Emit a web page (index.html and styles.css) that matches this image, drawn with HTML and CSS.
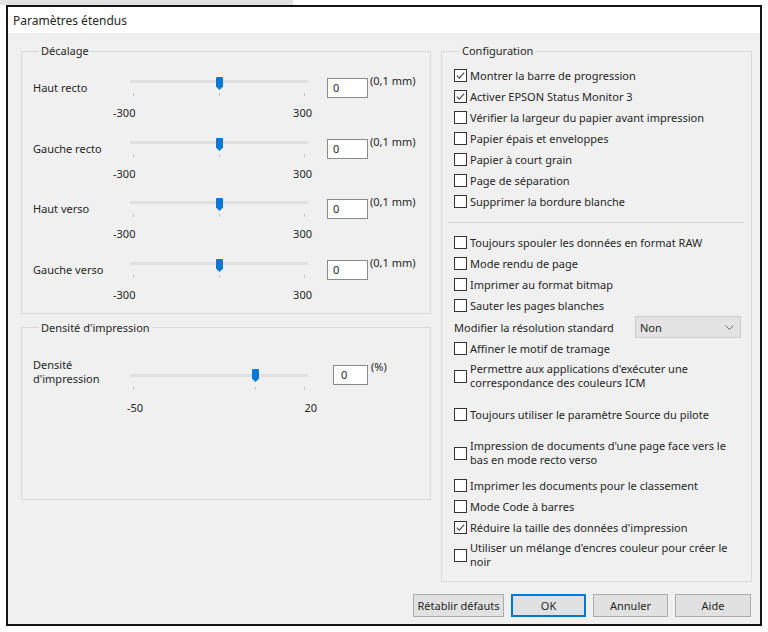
FILE: index.html
```html
<!DOCTYPE html>
<html lang="fr">
<head>
<meta charset="utf-8">
<title>Paramètres étendus</title>
<link rel="stylesheet" href="styles.css">
</head>
<body>
<div class="strip"></div>
<div class="window">
  <div class="titlebar">Paramètres étendus</div>
  <div class="client">
    <div class="left">
      <fieldset class="group g-offset">
        <legend>Décalage</legend>
        <div class="srow">
          <span class="slabel">Haut recto</span>
          <div class="slider" style="--p:0.5">
            <div class="track"></div><div class="tick t-start"></div><div class="tick t-mid"></div><div class="tick t-end"></div>
            <svg class="thumb" viewBox="0 0 7 13"><path d="M1 0H6Q7 0 7 1V9.5L3.5 13L0 9.5V1Q0 0 1 0Z"/></svg>
          </div>
          <span class="num">0</span>
          <span class="unit">(0,1 mm)</span>
          <div class="scale"><span>-300</span><span>300</span></div>
        </div>
        <div class="srow">
          <span class="slabel">Gauche recto</span>
          <div class="slider" style="--p:0.5">
            <div class="track"></div><div class="tick t-start"></div><div class="tick t-mid"></div><div class="tick t-end"></div>
            <svg class="thumb" viewBox="0 0 7 13"><path d="M1 0H6Q7 0 7 1V9.5L3.5 13L0 9.5V1Q0 0 1 0Z"/></svg>
          </div>
          <span class="num">0</span>
          <span class="unit">(0,1 mm)</span>
          <div class="scale"><span>-300</span><span>300</span></div>
        </div>
        <div class="srow">
          <span class="slabel">Haut verso</span>
          <div class="slider" style="--p:0.5">
            <div class="track"></div><div class="tick t-start"></div><div class="tick t-mid"></div><div class="tick t-end"></div>
            <svg class="thumb" viewBox="0 0 7 13"><path d="M1 0H6Q7 0 7 1V9.5L3.5 13L0 9.5V1Q0 0 1 0Z"/></svg>
          </div>
          <span class="num">0</span>
          <span class="unit">(0,1 mm)</span>
          <div class="scale"><span>-300</span><span>300</span></div>
        </div>
        <div class="srow">
          <span class="slabel">Gauche verso</span>
          <div class="slider" style="--p:0.5">
            <div class="track"></div><div class="tick t-start"></div><div class="tick t-mid"></div><div class="tick t-end"></div>
            <svg class="thumb" viewBox="0 0 7 13"><path d="M1 0H6Q7 0 7 1V9.5L3.5 13L0 9.5V1Q0 0 1 0Z"/></svg>
          </div>
          <span class="num">0</span>
          <span class="unit">(0,1 mm)</span>
          <div class="scale"><span>-300</span><span>300</span></div>
        </div>
      </fieldset>
      <fieldset class="group g-density">
        <legend>Densité d'impression</legend>
        <div class="srow dens">
          <span class="slabel">Densité<br>d'impression</span>
          <div class="slider" style="--p:0.714">
            <div class="track"></div><div class="tick t-start"></div><div class="tick t-mid"></div><div class="tick t-end"></div>
            <svg class="thumb" viewBox="0 0 7 13"><path d="M1 0H6Q7 0 7 1V9.5L3.5 13L0 9.5V1Q0 0 1 0Z"/></svg>
          </div>
          <span class="num">0</span>
          <span class="unit">(%)</span>
          <div class="scale"><span>-50</span><span>20</span></div>
        </div>
      </fieldset>
    </div>

    <fieldset class="group g-config">
      <legend>Configuration</legend>
      <div class="cb"><span class="box"><svg viewBox="0 0 11 11"><polyline points="1.8,5.6 4.3,8.1 9.2,2.6"/></svg></span><span class="txt">Montrer la barre de progression</span></div>
      <div class="cb"><span class="box"><svg viewBox="0 0 11 11"><polyline points="1.8,5.6 4.3,8.1 9.2,2.6"/></svg></span><span class="txt">Activer EPSON Status Monitor 3</span></div>
      <div class="cb"><span class="box"></span><span class="txt">Vérifier la largeur du papier avant impression</span></div>
      <div class="cb"><span class="box"></span><span class="txt">Papier épais et enveloppes</span></div>
      <div class="cb"><span class="box"></span><span class="txt">Papier à court grain</span></div>
      <div class="cb"><span class="box"></span><span class="txt">Page de séparation</span></div>
      <div class="cb"><span class="box"></span><span class="txt">Supprimer la bordure blanche</span></div>
      <hr class="sep">
      <div class="cb"><span class="box"></span><span class="txt">Toujours spouler les données en format RAW</span></div>
      <div class="cb"><span class="box"></span><span class="txt">Mode rendu de page</span></div>
      <div class="cb"><span class="box"></span><span class="txt">Imprimer au format bitmap</span></div>
      <div class="cb"><span class="box"></span><span class="txt">Sauter les pages blanches</span></div>
      <div class="selrow">
        <span class="sellabel">Modifier la résolution standard</span>
        <div class="sel"><span>Non</span><svg class="chev" viewBox="0 0 9 5"><polyline points="0.5,0.5 4.5,4.5 8.5,0.5"/></svg></div>
      </div>
      <div class="cb"><span class="box"></span><span class="txt">Affiner le motif de tramage</span></div>
      <div class="cb two"><span class="box"></span><span class="txt">Permettre aux applications d'exécuter une<br>correspondance des couleurs ICM</span></div>
      <div class="cb gap-l"><span class="box"></span><span class="txt">Toujours utiliser le paramètre Source du pilote</span></div>
      <div class="cb two gap-xl"><span class="box"></span><span class="txt">Impression de documents d'une page face vers le<br>bas en mode recto verso</span></div>
      <div class="cb gap-m"><span class="box"></span><span class="txt">Imprimer les documents pour le classement</span></div>
      <div class="cb"><span class="box"></span><span class="txt">Mode Code à barres</span></div>
      <div class="cb"><span class="box"><svg viewBox="0 0 11 11"><polyline points="1.8,5.6 4.3,8.1 9.2,2.6"/></svg></span><span class="txt">Réduire la taille des données d'impression</span></div>
      <div class="cb two"><span class="box"></span><span class="txt">Utiliser un mélange d'encres couleur pour créer le<br>noir</span></div>
    </fieldset>

    <div class="buttons">
      <div class="btn b-reset">Rétablir défauts</div>
      <div class="btn b-ok">OK</div>
      <div class="btn">Annuler</div>
      <div class="btn b-help">Aide</div>
    </div>
  </div>
</div>
</body>
</html>
```
FILE: styles.css
```css
* { box-sizing: border-box; }

body {
  margin: 0;
  background: #fff;
  font-family: "Noto Sans", "Open Sans", sans-serif;
  font-size: 11px;
  color: #262626;
}

.strip {
  width: 293px;
  height: 5px;
  background: #e3e3e3;
}

.window {
  margin-left: 6px;
  width: 756px;
  height: 621px;
  border: 2px solid #141414;
  display: flex;
  flex-direction: column;
  background: #f0f0f0;
}

.titlebar {
  height: 26px;
  line-height: 27px;
  background: #fff;
  padding-left: 5px;
  font-size: 12px;
}

.client {
  flex: 1;
  display: grid;
  grid-template-columns: 410px 311px;
  column-gap: 10px;
  align-items: start;
  align-content: start;
  padding: 11px 8px 0 13px;
}

.group {
  margin: 0;
  border: 1px solid #dadada;
  padding: 0;
  min-width: 0;
}

.group legend {
  margin-left: 6px;
  padding: 0 2px;
  line-height: 14px;
}

.left {
  display: flex;
  flex-direction: column;
  gap: 7px;
}

.g-offset { padding: 20px 0 11px 11px; }
.g-density { padding: 30px 0 84px 11px; }

.srow {
  display: grid;
  grid-template-columns: 97px 178px 60px auto;
  grid-template-rows: 20px 14px;
  row-gap: 8px;
  align-items: center;
}
.srow + .srow { margin-top: 18.5px; }

.slabel { line-height: 14px; }

.slider {
  position: relative;
  height: 20px;
}
.track {
  position: absolute;
  left: 0;
  right: 0;
  top: 2px;
  height: 3px;
  background: #e0e0e0;
}
.tick {
  position: absolute;
  top: 15px;
  width: 1px;
  height: 3px;
  background: #c4c4c4;
}
.t-start { left: 3px; }
.t-end { left: 174px; }
.t-mid { left: calc(3px + 171px * var(--p)); }
.thumb {
  position: absolute;
  top: -1px;
  left: calc(3px + 171px * var(--p) - 3px);
  width: 7px;
  height: 13px;
  fill: #0a78d4;
}

.num {
  justify-self: end;
  width: 41px;
  height: 20px;
  border: 1px solid #8a8a8a;
  background: #fff;
  padding-left: 5px;
  line-height: 18px;
}
.unit {
  align-self: start;
  margin-left: 2px;
  margin-top: -4px;
  line-height: 14px;
  white-space: nowrap;
}
.scale {
  grid-column: 2;
  grid-row: 2;
  display: flex;
  justify-content: space-between;
  margin: 0 -4px 0 -17px;
  line-height: 14px;
}

/* density row */
.srow.dens { row-gap: 16px; }
.dens .slabel { margin-bottom: 6px; }
.dens .track { top: 9px; }
.dens .tick { top: 22px; }
.dens .thumb { top: 4px; }
.dens .num { width: 35px; padding-left: 7px; }
.dens .unit { margin-left: 3px; margin-top: -5px; }
.dens .scale { margin: 0 -9px 0 -3px; }

/* configuration */
.g-config { padding: 7px 8px 12px 12px; }

.cb {
  display: flex;
  align-items: center;
  height: 21px;
}
.cb.two { height: 28px; margin-top: 3px; }
.cb.gap-l { margin-top: 14px; }
.cb.gap-xl { margin-top: 14px; }
.cb.gap-m { margin-top: 8px; }

.box {
  flex: none;
  width: 13px;
  height: 13px;
  margin-right: 3px;
  border: 1px solid #333;
  background: #fff;
  display: flex;
}
.box svg {
  width: 11px;
  height: 11px;
  fill: none;
  stroke: #4a4a4a;
  stroke-width: 1.2;
}
.txt {
  line-height: 14px;
  white-space: nowrap;
}

.sep {
  height: 0;
  border: 0;
  border-top: 1px solid #d2d2d2;
  margin: 10px -1px 9px -6px;
}

.selrow {
  display: flex;
  align-items: center;
  height: 22px;
}
.sellabel { width: 181px; flex: none; }
.sel {
  width: 106px;
  height: 22px;
  background: #e3e3e3;
  border: 1px solid #cccccc;
  padding: 0 6px 0 4px;
  display: flex;
  align-items: center;
  justify-content: space-between;
}
.chev {
  width: 9px;
  height: 5px;
  fill: none;
  stroke: #6a6a6a;
  stroke-width: 1;
}

.buttons {
  grid-column: 1 / -1;
  display: flex;
  justify-content: flex-end;
  gap: 7px;
  margin-top: 12px;
  padding-right: 1px;
}
.btn {
  width: 75px;
  height: 23px;
  border: 1px solid #adadad;
  background: #e1e1e1;
  display: flex;
  align-items: center;
  justify-content: center;
  white-space: nowrap;
}
.b-reset { width: 91px; }
.b-help { width: 76px; }
.b-ok {
  border-color: #0078d7;
  box-shadow: inset 0 0 0 1px #0078d7;
}
```
